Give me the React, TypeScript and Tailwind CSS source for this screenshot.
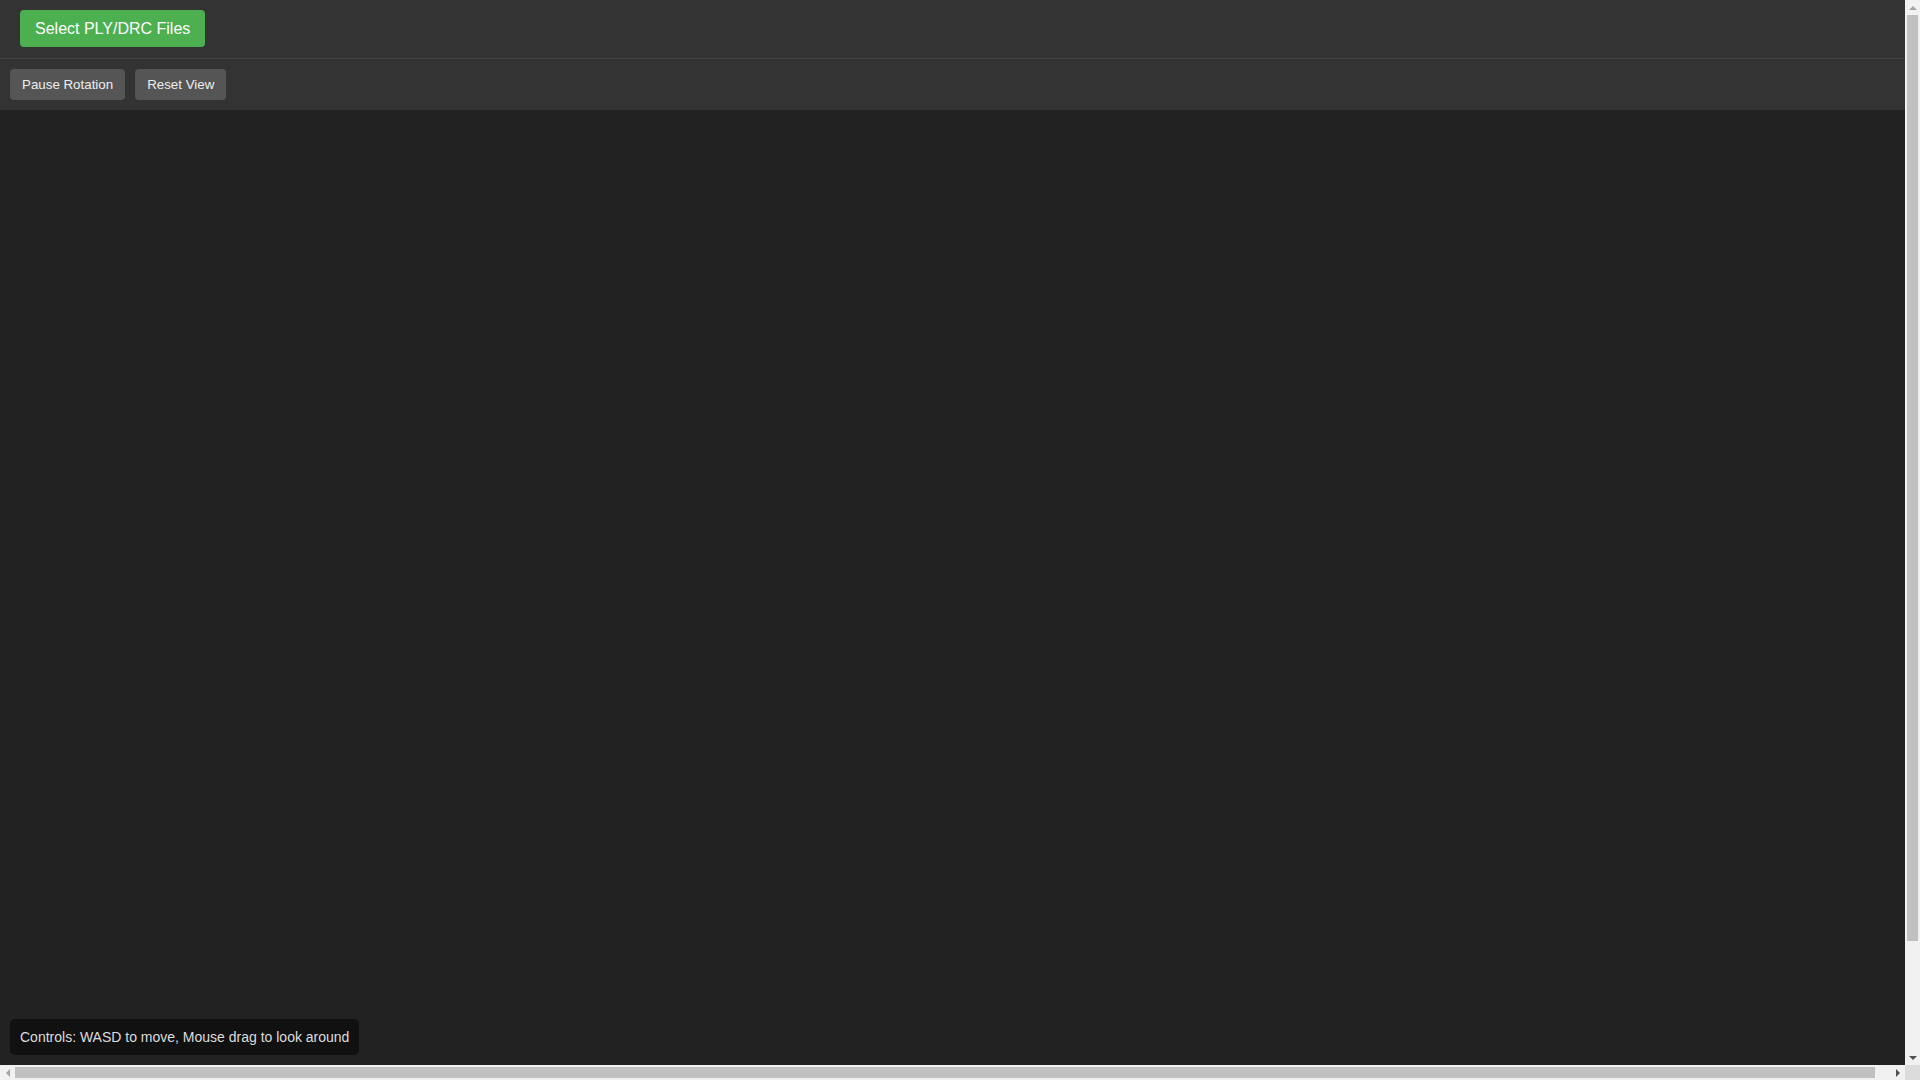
export default function App() {
  return (
    <div className="w-screen bg-[#222222] font-['Liberation_Sans',Arial,sans-serif]">
      {/* File picker bar */}
      <div className="h-[59px] border-b border-[#444444] bg-[#333333] px-5 pt-[10px]">
        <button className="h-[37px] rounded-[4px] bg-[#4caf50] px-[15px] text-[16px] text-white">
          Select PLY/DRC Files
        </button>
      </div>

      {/* Viewer toolbar */}
      <div className="flex h-[51px] items-center gap-[10px] bg-[#333333] px-[10px]">
        <button className="h-[31px] rounded-[4px] bg-[#555555] px-[12px] text-[13.33px] text-[#eeeeee]">
          Pause Rotation
        </button>
        <button className="h-[31px] rounded-[4px] bg-[#555555] px-[12px] text-[13.33px] text-[#eeeeee]">
          Reset View
        </button>
      </div>

      {/* Canvas area */}
      <div className="h-screen w-screen bg-[#222222]" />

      <div className="fixed bottom-[25px] left-[10px] rounded-[5px] bg-[#111111] px-[10px] py-[9px] text-[14px] leading-[18px] text-[#dddddd]">
        Controls: WASD to move, Mouse drag to look around
      </div>

      {/* window scrollbars */}
      <div className="fixed right-0 top-0 flex h-[1065px] w-[15px] flex-col items-center bg-[#f1f1f1]">
        <div className="flex h-[15px] items-center justify-center">
          <div className="h-0 w-0 border-x-[4px] border-b-[4px] border-x-transparent border-b-[#a3a3a3]" />
        </div>
        <div className="h-[926px] w-[11px] bg-[#c1c1c1]" />
        <div className="flex-1" />
        <div className="flex h-[15px] items-center justify-center">
          <div className="h-0 w-0 border-x-[4px] border-t-[4px] border-x-transparent border-t-[#505050]" />
        </div>
      </div>
      <div className="fixed bottom-0 left-0 flex h-[15px] w-[1905px] items-center bg-[#f1f1f1]">
        <div className="flex w-[15px] items-center justify-center">
          <div className="h-0 w-0 border-y-[4px] border-r-[4px] border-y-transparent border-r-[#a3a3a3]" />
        </div>
        <div className="h-[11px] w-[1860px] bg-[#c1c1c1]" />
        <div className="flex-1" />
        <div className="flex w-[15px] items-center justify-center">
          <div className="h-0 w-0 border-y-[4px] border-l-[4px] border-y-transparent border-l-[#505050]" />
        </div>
      </div>
      <div className="fixed bottom-0 right-0 h-[15px] w-[15px] bg-[#dcdcdc]" />
    </div>
  );
}
